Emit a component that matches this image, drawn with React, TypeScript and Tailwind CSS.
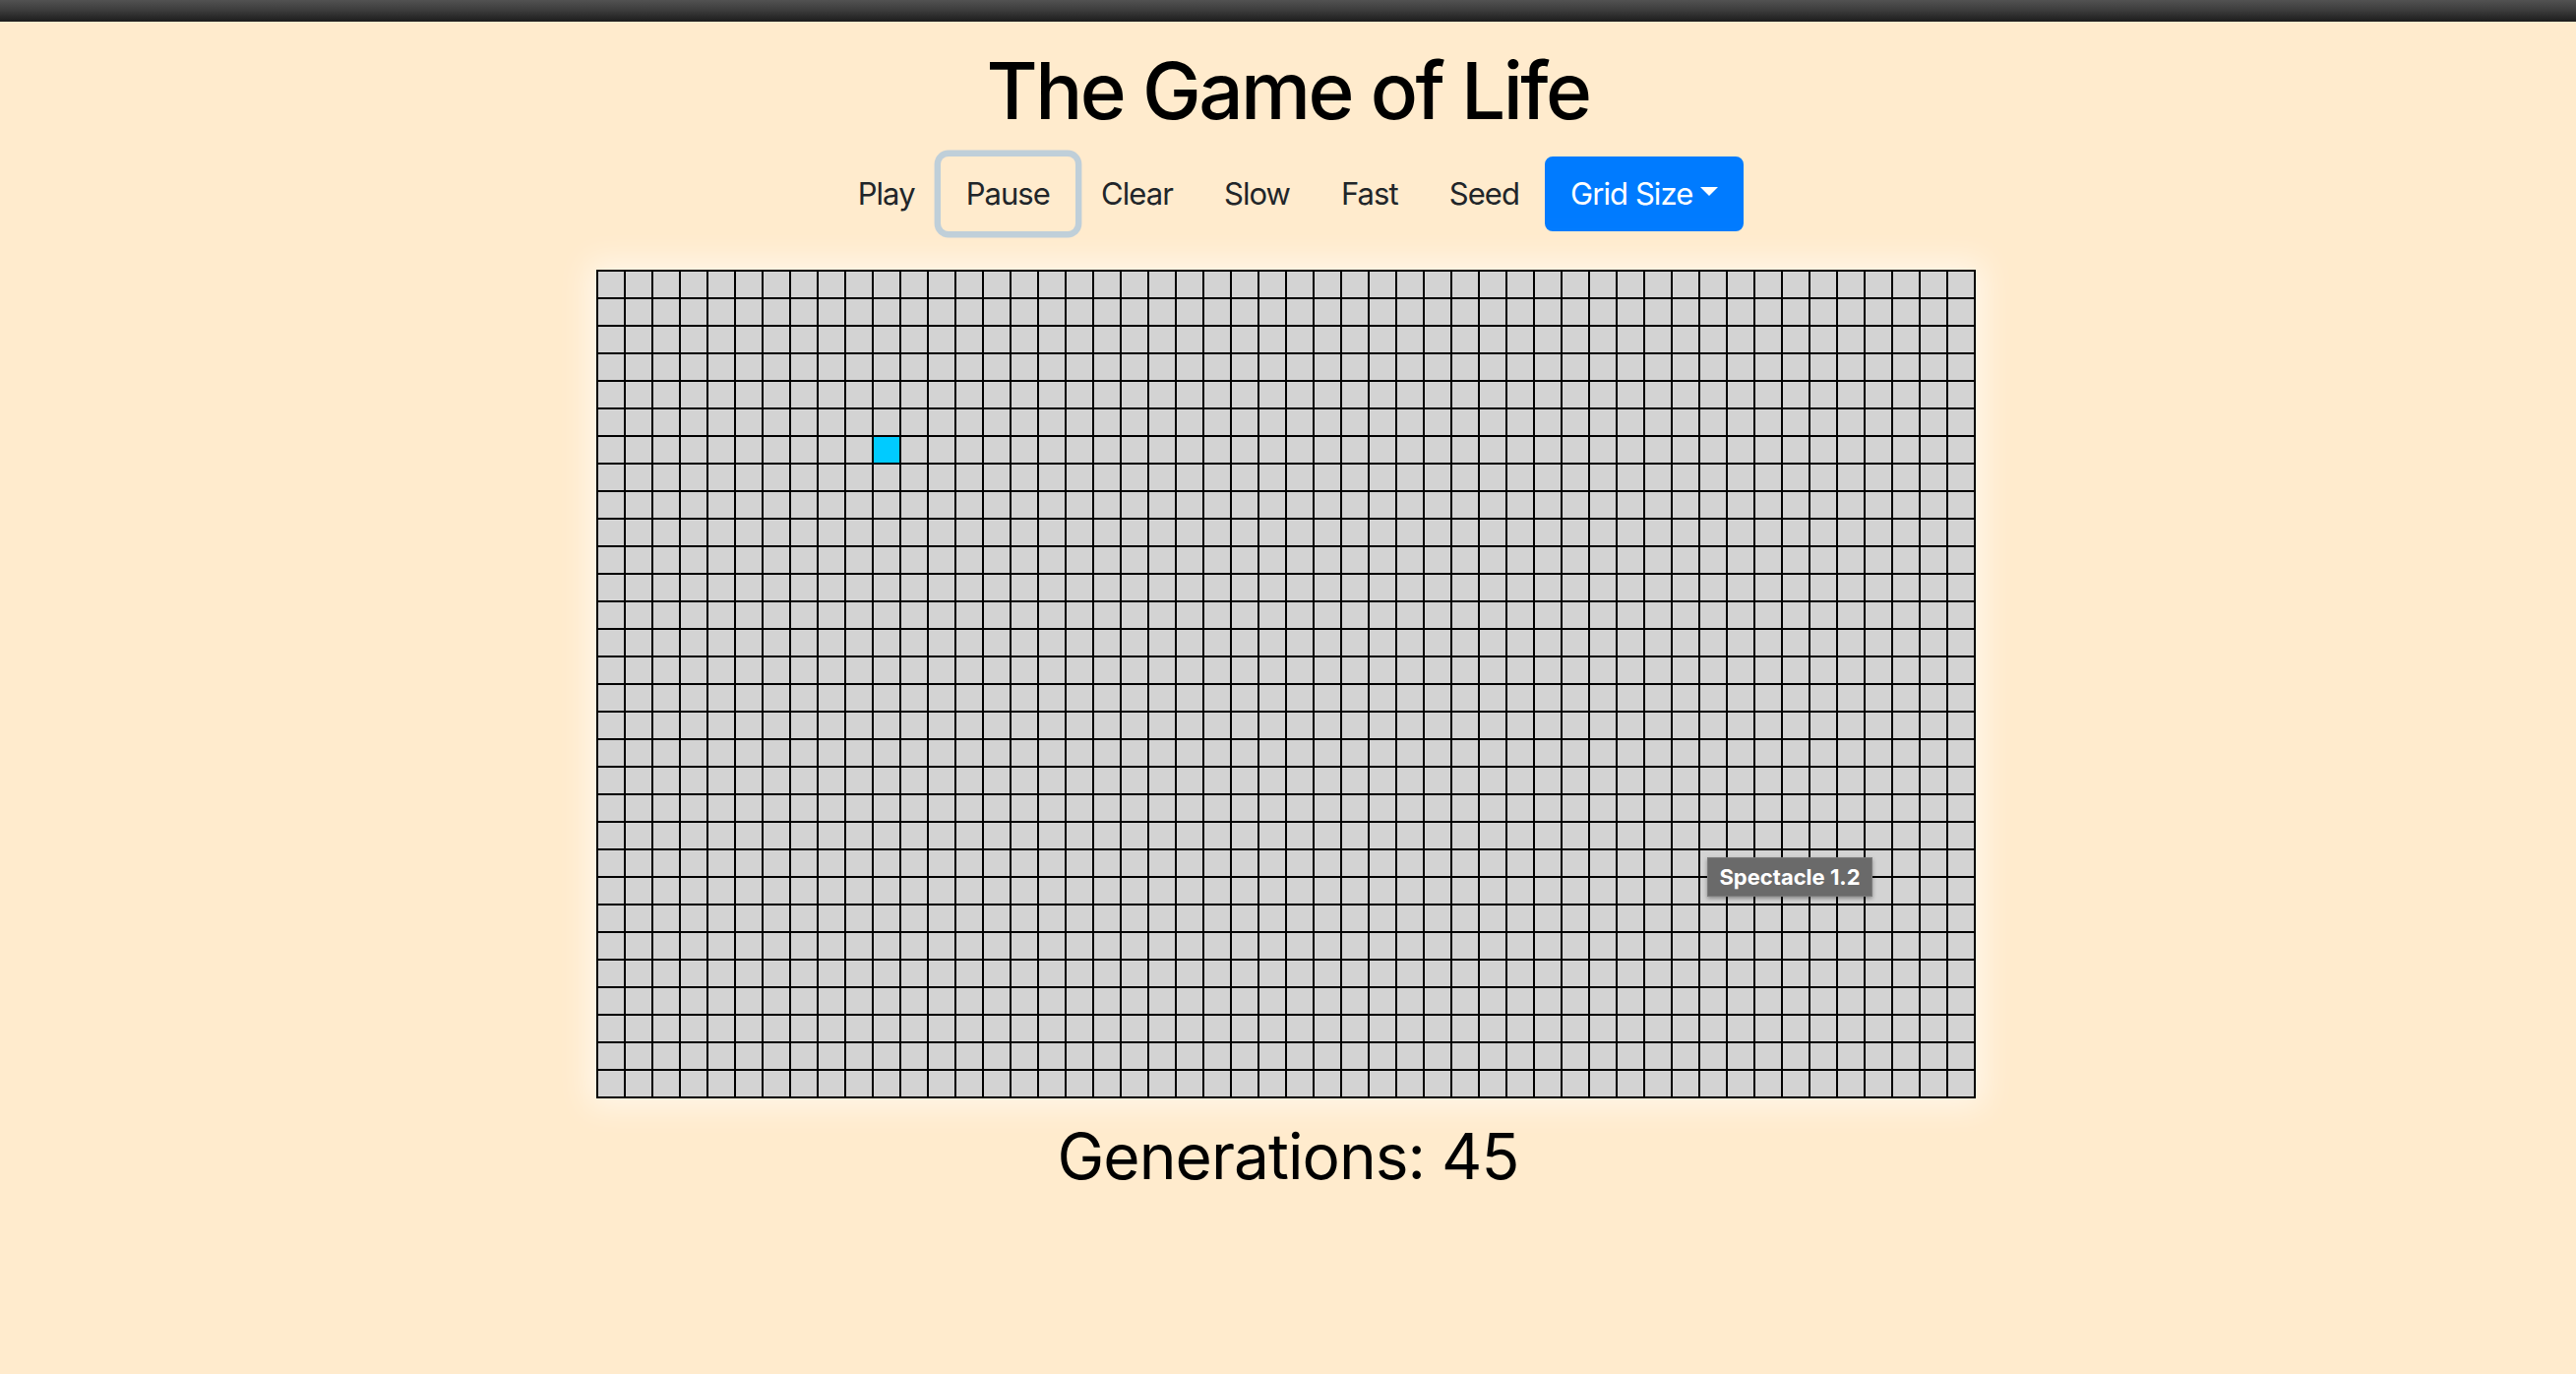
import React from "react";

const ROWS = 30;
const COLS = 50;

export default function App() {
  const cells: React.ReactNode[] = [];
  for (let r = 0; r < ROWS; r++) {
    for (let c = 0; c < COLS; c++) {
      const alive = r === 6 && c === 10;
      cells.push(
        <div
          key={`${r}-${c}`}
          className={
            alive
              ? "w-[28px] h-[28px] border border-black bg-[#00cbff]"
              : "w-[28px] h-[28px] border border-black bg-[#d3d3d3]"
          }
        />
      );
    }
  }

  const btn =
    "px-[24px] py-[12px] border-2 border-transparent rounded-[8px] text-[31px] leading-[48px] tracking-[-0.03em] text-[#212529]";

  return (
    <div
      className="min-h-[1396px] w-full bg-[#ffebcd] flex flex-col items-center"
      style={{ fontFamily: "Inter, 'Noto Sans', 'Liberation Sans', sans-serif" }}
    >
      <div className="w-full h-[22px] bg-gradient-to-b from-[#525252] via-[#3b3b3b] to-[#1d1d1d]" />
      <h1 className="mt-[22px] text-[80px] leading-[96px] font-medium tracking-[-0.032em] text-black">
        The Game of Life
      </h1>
      <div className="mt-[19px] flex">
        <button className={btn}>Play</button>
        <button className={`${btn} shadow-[0_0_0_6.4px_rgba(0,123,255,0.25)]`}>
          Pause
        </button>
        <button className={btn}>Clear</button>
        <button className={btn}>Slow</button>
        <button className={btn}>Fast</button>
        <button className={btn}>Seed</button>
        <button className="px-[24px] py-[12px] border-2 border-[#007bff] rounded-[8px] text-[31px] leading-[48px] tracking-[-0.03em] text-white bg-[#007bff] flex items-center">
          Grid Size
          <span className="inline-block ml-[8px] mb-[6px] w-0 h-0 border-t-[9.6px] border-t-white border-x-[9.6px] border-x-transparent border-b-0" />
        </button>
      </div>
      <div className="mt-[39px] mr-[4px] relative border border-black shadow-[0_0_30px_8px_rgba(255,255,255,0.6)] grid grid-cols-[repeat(50,28px)]">
        {cells}
        <div className="absolute left-[1128px] top-[596px] w-[168px] h-[40px] bg-[#6a6a6a] border border-[#7c7c7c] shadow-[0_2px_4px_rgba(0,0,0,0.35)] flex items-center justify-center text-white font-bold text-[22px] leading-none">
          Spectacle 1.2
        </div>
      </div>
      <h2 className="mt-[20px] text-[64px] leading-[77px] font-normal tracking-[-0.015em] text-black">
        Generations: 45
      </h2>
    </div>
  );
}
